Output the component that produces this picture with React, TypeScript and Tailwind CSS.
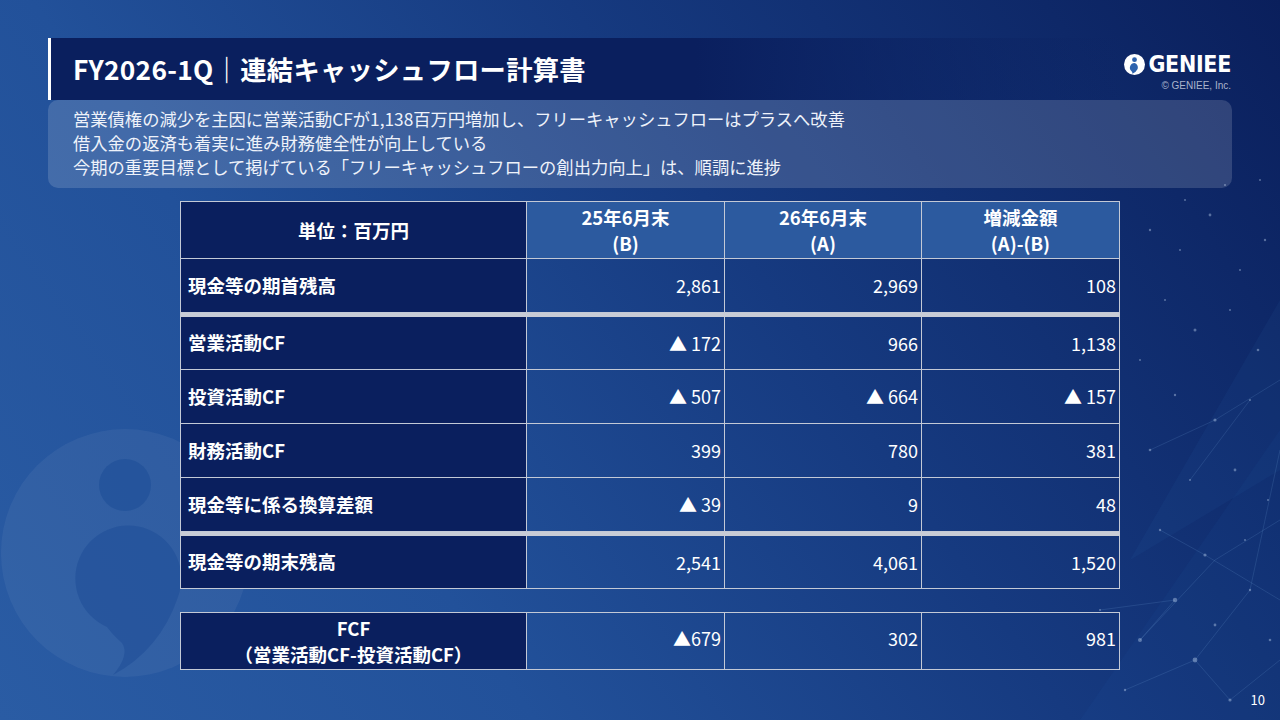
import React from "react";

const jp = { fontFamily: '"Noto Sans CJK JP", "Noto Sans", sans-serif' };

type Row = { label: string; b: string; a: string; diff: string; thick?: boolean };

const rows: Row[] = [
  { label: "現金等の期首残高", b: "2,861", a: "2,969", diff: "108" },
  { label: "営業活動CF", b: "▲ 172", a: "966", diff: "1,138", thick: true },
  { label: "投資活動CF", b: "▲ 507", a: "▲ 664", diff: "▲ 157" },
  { label: "財務活動CF", b: "399", a: "780", diff: "381" },
  { label: "現金等に係る換算差額", b: "▲ 39", a: "9", diff: "48" },
  { label: "現金等の期末残高", b: "2,541", a: "4,061", diff: "1,520", thick: true },
];

const dots: [number, number, number][] = [
  [1150, 230, 1.2], [1180, 250, 1], [1210, 215, 1.4], [1240, 270, 1], [1265, 240, 1.2],
  [1165, 300, 1], [1195, 330, 1.5], [1230, 310, 1], [1258, 350, 1.3], [1140, 360, 1],
  [1175, 395, 1.2], [1215, 420, 1.6], [1250, 400, 1], [1150, 450, 1.3], [1190, 480, 1],
  [1235, 470, 1.4], [1268, 500, 1], [1160, 530, 1.2], [1205, 555, 1.6], [1245, 540, 1],
  [1175, 600, 2.2], [1215, 625, 1.4], [1250, 590, 1.2], [1140, 640, 2], [1195, 660, 2.4],
  [1230, 700, 1.6], [1125, 690, 1.2], [1270, 640, 1.3], [1100, 610, 1], [1090, 560, 1.1],
  [1260, 180, 1], [1225, 185, 1.1], [1185, 200, 1],
];

const lines: [number, number, number, number][] = [
  [1140, 640, 1215, 560], [1215, 560, 1280, 520], [1195, 660, 1250, 590], [1250, 590, 1280, 450],
  [1175, 600, 1140, 640], [1125, 690, 1195, 660], [1195, 660, 1230, 700], [1150, 450, 1215, 420],
  [1215, 420, 1280, 380], [1160, 530, 1205, 555], [1205, 555, 1280, 600], [1100, 610, 1175, 600],
  [1230, 700, 1280, 660], [1190, 480, 1250, 400],
];

function Logo() {
  return (
    <div className="flex flex-col items-end">
      <div className="flex items-center gap-[3px]">
        <svg width="21" height="21" viewBox="0 0 20 20">
          <circle cx="10" cy="10" r="10" fill="#ffffff" />
          <circle cx="10" cy="5.4" r="2.3" fill="#2d62ad" />
          <path d="M10 8.6 a4.4 4.4 0 0 0 -3 7.6 q1.2 1 1 2.6 q3.6 -1.8 5 -4.6 a4.4 4.4 0 0 0 -3 -5.6 Z" fill="#2d62ad" />
        </svg>
        <span
          className="text-[23px] font-bold leading-none text-white tracking-[-0.3px]"
          style={{ fontFamily: '"DejaVu Sans Condensed", "Liberation Sans", sans-serif' }}
        >
          GENIEE
        </span>
      </div>
      <span className="mt-[5px] text-[10px] leading-none text-[#aab4cc]" style={{ fontFamily: '"Liberation Sans", sans-serif' }}>
        © GENIEE, Inc.
      </span>
    </div>
  );
}

function Cell({ children, className = "" }: { children: React.ReactNode; className?: string }) {
  return <div className={`border-r border-b border-[#c3c9d6] flex items-center ${className}`}>{children}</div>;
}

export default function App() {
  return (
    <div
      className="relative w-[1280px] h-[720px] overflow-hidden text-white bg-[linear-gradient(55deg,#2a5ca4_0%,#22519a_30%,#163a80_60%,#0a1f5c_100%)]"
      style={jp}
    >
      <svg className="absolute inset-0 pointer-events-none" width="1280" height="720">
        <circle cx="125" cy="553" r="124" fill="#ffffff" fillOpacity="0.05" />
        <circle cx="125" cy="485" r="26" fill="#22519a" fillOpacity="0.75" />
        <path
          d="M107 627 A53 53 0 1 1 178 597 Q160 650 113 675 Q130 655 122 643 Q112 634 107 627 Z"
          fill="#22519a"
          fillOpacity="0.7"
        />
        <path d="M1080 720 L1280 430 L1280 720 Z" fill="#2a6ab5" fillOpacity="0.08" />
        <path d="M1130 560 L1280 300 L1280 470 Z" fill="#3a7cc4" fillOpacity="0.07" />
        {lines.map(([x1, y1, x2, y2], i) => (
          <line key={i} x1={x1} y1={y1} x2={x2} y2={y2} stroke="#7fb0e6" strokeOpacity="0.2" strokeWidth="0.8" />
        ))}
        {dots.map(([cx, cy, r], i) => (
          <circle key={i} cx={cx} cy={cy} r={r} fill="#c7dcf5" fillOpacity="0.4" />
        ))}
      </svg>

      <div className="relative flex flex-col pt-[38px] px-[48px]">
        <div className="flex items-center h-[62px]">
          <div className="flex items-center h-full flex-1 border-l-[3px] border-white bg-[linear-gradient(90deg,#0a1f5e_0%,#0a1f5e_60%,rgba(10,31,94,0)_100%)] pl-[22px]">
            <h1 className="text-[26.3px] font-bold tracking-[0.3px] leading-none">FY2026-1Q｜連結キャッシュフロー計算書</h1>
          </div>
          <div className="pr-[1px] pt-[6px]">
            <Logo />
          </div>
        </div>

        <div className="rounded-[10px] bg-white/15 h-[88px] pl-[25px] pt-[7px] text-[17.3px] leading-[24px] text-[#eef2fa]">
          <p>営業債権の減少を主因に営業活動CFが1,138百万円増加し、フリーキャッシュフローはプラスへ改善</p>
          <p>借入金の返済も着実に進み財務健全性が向上している</p>
          <p>今期の重要目標として掲げている「フリーキャッシュフローの創出力向上」は、順調に進捗</p>
        </div>

        <div className="ml-[132px] mt-[13px] w-[940px] border-l border-t border-[#c3c9d6]">
          <div className="grid grid-cols-[346px_198px_197px_198px] h-[57px] text-[18.5px] font-bold leading-[26px]">
            <Cell className="bg-[#0a1f5e] justify-center">単位：百万円</Cell>
            <Cell className="bg-[#2c5a9f] justify-center text-center">
              <span>25年6月末<br />(B)</span>
            </Cell>
            <Cell className="bg-[#2c5a9f] justify-center text-center">
              <span>26年6月末<br />(A)</span>
            </Cell>
            <Cell className="bg-[#2c5a9f] justify-center text-center">
              <span>増減金額<br />(A)-(B)</span>
            </Cell>
          </div>
          {rows.map((r) => (
            <div
              key={r.label}
              className={`grid grid-cols-[346px_198px_197px_198px] h-[54px] text-[18px] ${r.thick ? "border-t-[4px] border-[#c8ccd6] h-[57px]" : ""}`}
            >
              <Cell className="bg-[#0a1f5e] pl-[7px] font-bold text-[18.5px]">{r.label}</Cell>
              <Cell className="justify-end pr-[3px]">{r.b}</Cell>
              <Cell className="justify-end pr-[3px]">{r.a}</Cell>
              <Cell className="justify-end pr-[3px]">{r.diff}</Cell>
            </div>
          ))}
        </div>

        <div className="ml-[132px] mt-[23px] w-[940px] border-l border-t border-[#c3c9d6]">
          <div className="grid grid-cols-[346px_198px_197px_198px] h-[57px] text-[18px]">
            <Cell className="bg-[#0a1f5e] justify-center text-center font-bold leading-[26px] text-[18.5px]">
              <span>FCF<br />（営業活動CF-投資活動CF）</span>
            </Cell>
            <Cell className="justify-end pr-[3px] pb-[6px]">▲679</Cell>
            <Cell className="justify-end pr-[3px] pb-[6px]">302</Cell>
            <Cell className="justify-end pr-[3px] pb-[6px]">981</Cell>
          </div>
        </div>
      </div>

      <div className="absolute right-[15px] bottom-[14px] text-[13px] leading-none text-white">10</div>
    </div>
  );
}
